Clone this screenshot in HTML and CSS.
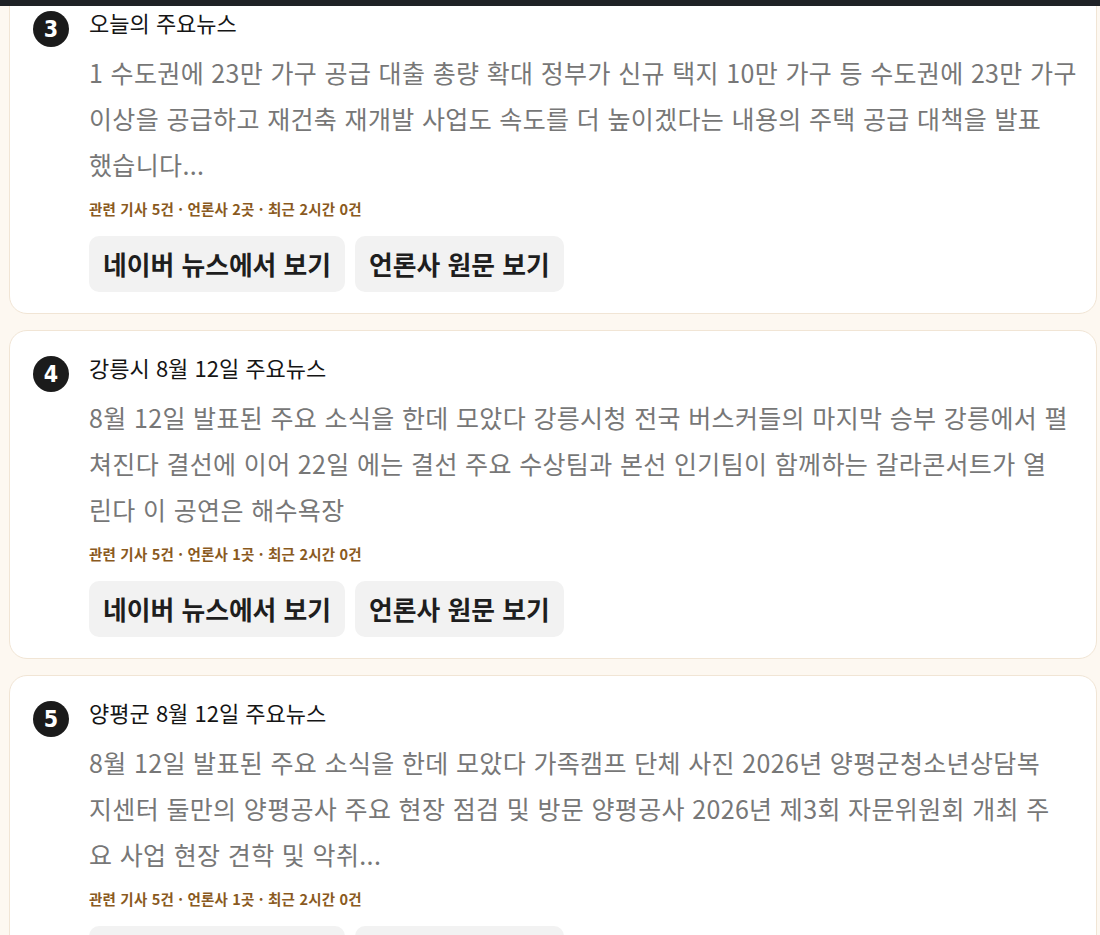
FILE: index.html
```html
<!DOCTYPE html>
<html lang="ko">
<head>
<meta charset="utf-8">
<title>주요뉴스</title>
<link rel="stylesheet" href="styles.css">
</head>
<body>
<div class="topbar"></div>
<main class="list">
  <article class="card">
    <div class="badge">3</div>
    <div class="content">
      <h2 class="title">오늘의 주요뉴스</h2>
      <p class="summary">1 수도권에 23만 가구 공급 대출 총량 확대 정부가 신규 택지 10만 가구 등 수도권에 23만 가구<br>이상을 공급하고 재건축 재개발 사업도 속도를 더 높이겠다는 내용의 주택 공급 대책을 발표<br>했습니다...</p>
      <p class="meta">관련 기사 5건 · 언론사 2곳 · 최근 2시간 0건</p>
      <div class="actions">
        <a class="btn" href="#">네이버 뉴스에서 보기</a>
        <a class="btn" href="#">언론사 원문 보기</a>
      </div>
    </div>
  </article>
  <article class="card">
    <div class="badge">4</div>
    <div class="content">
      <h2 class="title">강릉시 8월 12일 주요뉴스</h2>
      <p class="summary">8월 12일 발표된 주요 소식을 한데 모았다 강릉시청 전국 버스커들의 마지막 승부 강릉에서 펼<br>쳐진다 결선에 이어 22일 에는 결선 주요 수상팀과 본선 인기팀이 함께하는 갈라콘서트가 열<br>린다 이 공연은 해수욕장</p>
      <p class="meta">관련 기사 5건 · 언론사 1곳 · 최근 2시간 0건</p>
      <div class="actions">
        <a class="btn" href="#">네이버 뉴스에서 보기</a>
        <a class="btn" href="#">언론사 원문 보기</a>
      </div>
    </div>
  </article>
  <article class="card">
    <div class="badge">5</div>
    <div class="content">
      <h2 class="title">양평군 8월 12일 주요뉴스</h2>
      <p class="summary">8월 12일 발표된 주요 소식을 한데 모았다 가족캠프 단체 사진 2026년 양평군청소년상담복<br>지센터 둘만의 양평공사 주요 현장 점검 및 방문 양평공사 2026년 제3회 자문위원회 개최 주<br>요 사업 현장 견학 및 악취...</p>
      <p class="meta">관련 기사 5건 · 언론사 1곳 · 최근 2시간 0건</p>
      <div class="actions">
        <a class="btn" href="#">네이버 뉴스에서 보기</a>
        <a class="btn" href="#">언론사 원문 보기</a>
      </div>
    </div>
  </article>
</main>
</body>
</html>
```
FILE: styles.css
```css
html, body {
  margin: 0;
  padding: 0;
  background: #fdf8f1;
  font-family: "Noto Sans CJK KR", "Noto Sans", sans-serif;
  overflow: hidden;
}

.topbar {
  position: fixed;
  top: 0;
  left: 0;
  right: 0;
  height: 6px;
  background: #1f2226;
  z-index: 10;
}

.list {
  margin-top: -15px;
  padding: 0 3px 0 9px;
  display: flex;
  flex-direction: column;
  gap: 16px;
}

.card {
  background: #ffffff;
  border: 1px solid #f1e5d5;
  border-radius: 18px;
  padding: 24px 20px 21px 23px;
  display: flex;
  gap: 20px;
  align-items: flex-start;
}

.badge {
  flex: none;
  width: 36px;
  height: 36px;
  margin-top: 1px;
  border-radius: 50%;
  background: #1b1b1b;
  color: #ffffff;
  font-family: "DejaVu Sans Condensed", "DejaVu Sans", sans-serif;
  font-weight: 700;
  font-size: 23px;
  line-height: 36px;
  text-align: center;
}

.content {
  flex: 1;
  min-width: 0;
}

.title {
  margin: 0;
  font-size: 22px;
  font-weight: 400;
  line-height: 24px;
  color: #151515;
}

.summary {
  margin: 15px 0 0;
  font-size: 25px;
  font-weight: 400;
  line-height: 46px;
  color: #777777;
  letter-spacing: 0.35px;
  white-space: nowrap;
}

.meta {
  margin: 13px 0 0;
  font-size: 14.5px;
  font-weight: 700;
  line-height: 18px;
  color: #8a5a1e;
  letter-spacing: 0.2px;
}

.actions {
  margin-top: 18px;
  display: flex;
  gap: 10px;
}

.btn {
  display: block;
  height: 56px;
  padding: 0 14px;
  border-radius: 10px;
  background: #f2f2f2;
  color: #1e1e1e;
  font-size: 25.8px;
  font-weight: 700;
  line-height: 56px;
  text-decoration: none;
}
```
